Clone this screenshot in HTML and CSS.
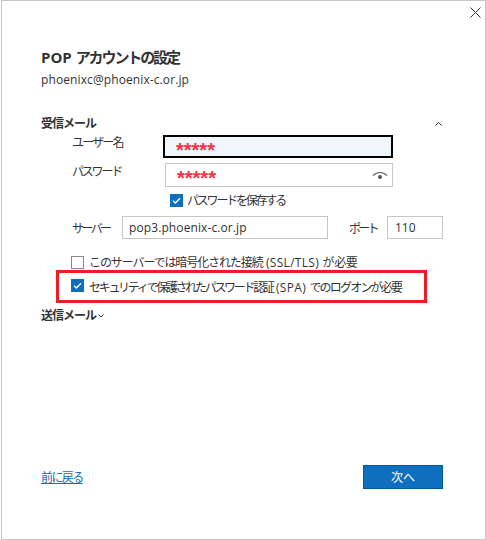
FILE: index.html
```html
<!DOCTYPE html>
<html lang="ja">
<head>
	<meta charset="UTF-8">
	<title>POP アカウントの設定</title>
	<link rel="stylesheet" href="styles.css">
</head>
<body>
	<div class="dialog">
		<button class="close" aria-label="閉じる">
			<svg width="11" height="11" viewBox="0 0 11 11"><path d="M.5.5l10 10M10.5.5l-10 10" stroke="#333" fill="none"/></svg>
		</button>
		<h1 class="title">POP <span class="title-kana">アカウントの設定</span></h1>
		<p class="email">phoenixc@phoenix-c.or.jp</p>

		<div class="section-head incoming">
			<span>受信メール</span>
			<svg class="chevron-up" width="7" height="4" viewBox="0 0 7 4"><path d="M.5 3.5l3-3 3 3" stroke="#333" fill="none"/></svg>
		</div>

		<div class="field-row user-row">
			<label class="field-label user-label">ユーザー名</label>
			<div class="input focused"><span class="stars">*****</span></div>
		</div>
		<div class="field-row pass-row">
			<label class="field-label pass-label">パスワード</label>
			<div class="input password">
				<span class="stars">*****</span>
				<svg width="16" height="9" viewBox="0 0 16 9"><path d="M1 4.500C5 .5 11 .5 15 4.500" stroke="#555" stroke-width="1.2" fill="none"/><circle cx="8" cy="6" r="2" fill="#555"/></svg>
			</div>
		</div>
		<div class="check-row save-row">
			<span class="check on"><svg width="13" height="13" viewBox="0 0 13 13"><path d="M3 6.800l2.400 2.200L10 4.200" stroke="#fff" stroke-width="1.4" fill="none"/></svg></span>
			<span class="check-text save-text">パスワードを保存する</span>
		</div>

		<div class="server-row">
			<label class="field-label server-label">サーバー</label>
			<div class="input server">pop3.phoenix-c.or.jp</div>
			<label class="field-label port-label">ポート</label>
			<div class="input port">110</div>
		</div>

		<div class="check-row ssl-row">
			<span class="check"></span>
			<span class="check-text ssl-text">このサーバーでは暗号化された接続<span class="latin"> (SSL/TLS) </span><span class="tail">が必要</span></span>
		</div>
		<div class="check-row spa-row">
			<span class="check on"><svg width="13" height="13" viewBox="0 0 13 13"><path d="M3 6.800l2.400 2.200L10 4.200" stroke="#fff" stroke-width="1.4" fill="none"/></svg></span>
			<span class="check-text spa-text">セキュリティで保護されたパスワード認証<span class="latin"> (SPA) </span><span class="tail">でのログオンが必要</span></span>
		</div>

		<div class="section-head outgoing">
			<span>送信メール</span>
			<svg width="6" height="4" viewBox="0 0 6 4"><path d="M.5.5L3 3 5.500.5" stroke="#333" fill="none"/></svg>
		</div>

		<div class="footer">
			<a href="#" class="back">前に戻る</a>
			<button class="next">次へ</button>
		</div>
	</div>
</body>
</html>
```

FILE: styles.css
```css
* {
	box-sizing: border-box;
}
body {
	margin: 0;
	background: #fff;
	color: #333;
	font-family: "Open Sans", "Noto Sans CJK JP", sans-serif;
	font-size: 12px;
}
.dialog {
	position: relative;
	width: 485px;
	height: 540px;
	margin-left: 1px;
	padding: 46px 42px 0 39px;
	border: 1px solid #c6c6c6;
	display: flex;
	flex-direction: column;
}
.close {
	position: absolute;
	top: 6px;
	right: 4px;
	padding: 0;
	border: 0;
	background: none;
	line-height: 0;
}
.title {
	margin: 0;
	font-size: 15px;
	line-height: 20px;
	font-weight: 700;
}
.title-kana {
	letter-spacing: -2.1px;
}
.email {
	margin: 4px 0 0;
	line-height: 18px;
	letter-spacing: .1px;
}
.section-head {
	display: flex;
	align-items: center;
	font-weight: 700;
	line-height: 18px;
	letter-spacing: -1px;
}
.incoming {
	justify-content: space-between;
	margin-top: 26px;
}
.chevron-up {
	margin-right: 1px;
}
.outgoing {
	gap: 2px;
	margin-top: 4px;
}
.field-row {
	display: flex;
	align-items: flex-start;
	padding-left: 31px;
}
.field-label {
	line-height: 18px;
	white-space: nowrap;
}
.field-row .field-label {
	width: 91px;
	margin-top: -1px;
}
.field-row .pass-label {
	margin-top: 0;
	letter-spacing: -2.2px;
}
.user-label {
	letter-spacing: -1.8px;
}
.server-label {
	width: 50px;
	margin-top: 2px;
	letter-spacing: -2.6px;
}
.port-label {
	width: 38px;
	margin: 2px 0 0 21px;
	letter-spacing: -2.7px;
}
.input {
	display: flex;
	align-items: center;
	height: 23px;
	border: 1px solid #c6c6c6;
	background: #fff;
}
.user-row {
	margin-top: 2px;
}
.pass-row {
	margin-top: 5px;
}
.focused {
	width: 230px;
	border: 2px solid #000;
	background: #eff6fc;
	padding-left: 11px;
}
.password {
	width: 228px;
	height: 24px;
	margin-left: 2px;
	padding: 0 4px 0 11px;
	justify-content: space-between;
}
.stars {
	color: #ee3344;
	font-family: "Liberation Sans", sans-serif;
	font-size: 20px;
	font-weight: 700;
	line-height: 26px;
	height: 20px;
}
.check-row {
	display: flex;
	align-items: center;
	gap: 5px;
	white-space: nowrap;
}
.check-text {
	padding-top: 2px;
	line-height: 16px;
}
.check {
	width: 13px;
	height: 13px;
	border: 1px solid #8a8a8a;
	background: #fff;
	line-height: 0;
	flex: none;
}
.check.on {
	border: 0;
	background: #106ebe;
}
.latin {
	letter-spacing: .3px;
}
.save-row {
	margin-top: 4px;
	padding-left: 129px;
	gap: 4px;
}
.save-text {
	letter-spacing: -2.2px;
}
.server-row {
	display: flex;
	align-items: center;
	margin-top: 7px;
	padding-left: 31px;
}
.server {
	width: 206px;
	padding-left: 6px;
	letter-spacing: .1px;
}
.port {
	width: 56px;
	padding-left: 7px;
}
.ssl-row {
	margin-top: 14px;
	padding-left: 30px;
}
.ssl-text {
	letter-spacing: -1.1px;
}
.ssl-text .tail {
	letter-spacing: -.3px;
}
.spa-row {
	margin: -1px 0 0 15px;
	width: 371px;
	height: 33px;
	padding: 0 0 2px 12px;
	border: 3px solid #ee1c25;
}
.spa-text {
	padding-top: 4px;
	letter-spacing: -2.300px;
}
.spa-text .tail {
	letter-spacing: -1.8px;
}
.footer {
	margin-top: auto;
	margin-bottom: 50px;
	display: flex;
	align-items: center;
	justify-content: space-between;
}
.back {
	color: #106ebe;
	letter-spacing: -1.6px;
}
.next {
	width: 80px;
	height: 24px;
	border: 1px solid #005a9e;
	background: #106ebe;
	color: #fff;
	font: inherit;
}
```
